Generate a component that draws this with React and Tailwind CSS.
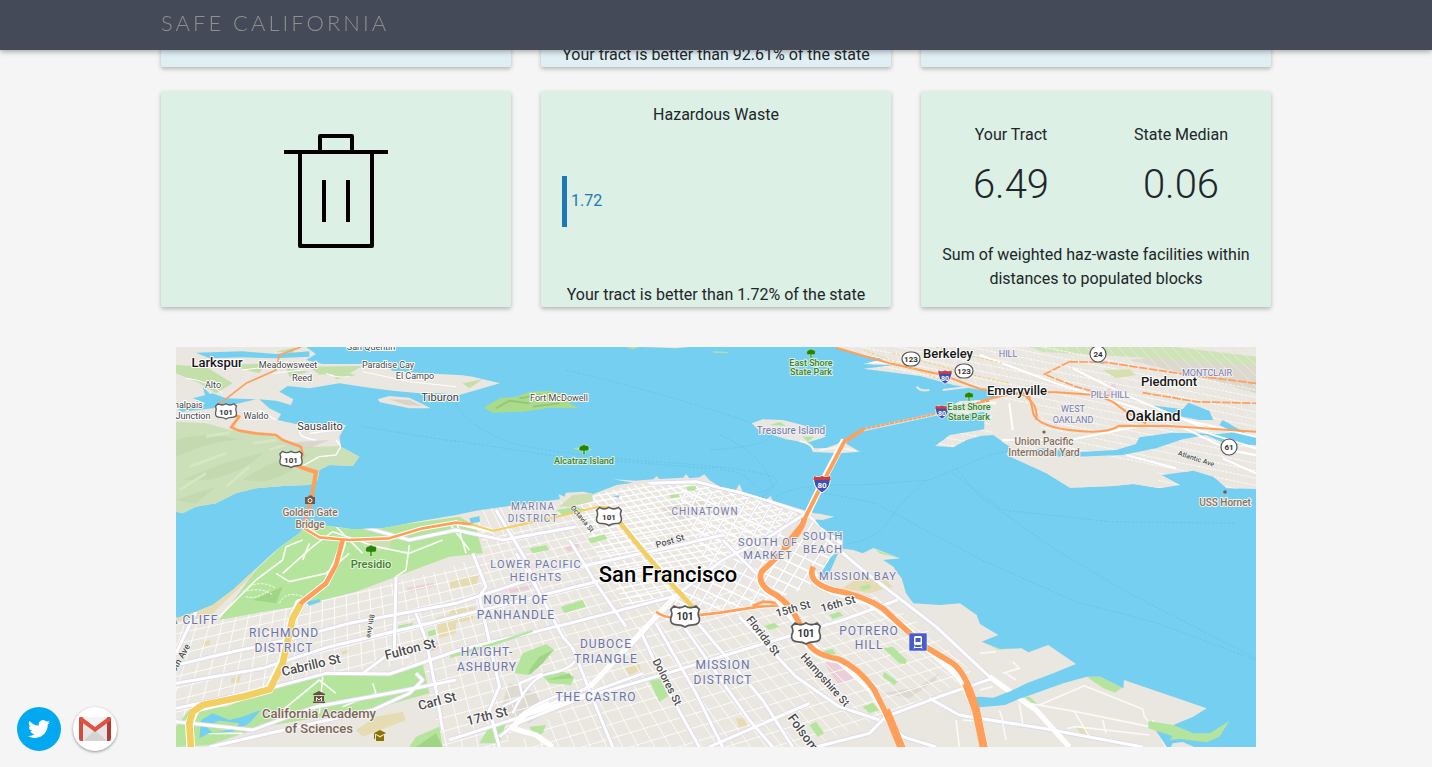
import React from "react";

const LAND = "#eae6e0";
const WATER = "#75cff0";
const PARK = "#b5e59d";
const SAND = "#e6dcb4";
const ORANGE = "#ff9f59";
const YELLOW = "#f3cf61";

const SF_COAST =
  "M0 835 L60 815 110 795 170 750 230 695 290 640 320 615 370 580 385 562 455 557 530 568 620 565 720 545 840 525 900 512 985 500 1152 478 1148 462 1165 470 1170 458 1222 455 1252 462 1322 435 1370 428 1312 418 1378 422 1432 418 1442 408 1450 417 1522 413 1530 402 1540 415 1570 412 1585 403 1600 420 1632 440 1680 450 1690 432 1700 455 1772 478 1784 468 1790 482 1882 510 1915 520 1935 522 1975 530 1940 540 1915 538 1932 560 2002 605 1990 625 2032 630 2060 640 2092 624 2172 655 2122 660 2152 680 2165 700 2177 715 2190 760 2212 790 2292 795 2352 790 2402 825 2412 852 2467 885 2417 905 2472 927 2537 925 2557 937 2617 915 2700 972 2632 1000 2552 1030 2522 1045 2487 1060 2452 1073 2412 1070 2392 1072 2400 1100 2412 1102 2487 1095 2522 1080 2662 1030 2732 1010 2772 1010 2842 1045 2844 1020 3092 1105 3052 1130 2992 1155 2932 1160 2972 1221 0 1221 Z";
const EAST_BAY =
  "M1977 21 L2032 40 2122 57 2062 72 2150 76 2062 86 2232 108 2332 135 2412 150 2457 150 2462 168 2440 180 2352 183 2312 205 2332 225 2372 222 2425 215 2425 268 2322 285 2277 318 2332 322 2372 300 2412 288 2452 285 2500 320 2492 345 2612 400 2682 443 2812 438 2872 432 2952 445 3012 435 2957 405 3052 392 3112 410 3152 445 3240 447 3240 21 Z";
const MARIN =
  "M0 21 L390 21 420 42 390 60 440 72 620 72 650 92 720 98 860 106 890 110 972 130 925 143 850 165 790 160 730 160 650 152 580 143 490 130 400 145 335 138 310 155 352 178 345 195 300 182 250 178 280 205 315 222 305 240 360 252 510 255 490 290 495 320 550 350 530 378 460 375 430 390 425 420 400 435 330 437 240 445 180 460 120 490 60 500 20 520 0 515 Z";

const range = (n) => Array.from({ length: n }, (_, i) => i);

const avenues = range(96).map((i) => `M475 -470 L${-1300 + i * 48} 1221`).join(" ");
const streets = range(44)
  .map((i) => {
    const y = 770 + i * 26 + i * i * 0.5;
    return `M0 ${y} L2700 ${y - 2700 * (0.21 + i * 0.004)}`;
  })
  .join(" ");
const somaA = range(30).map((i) => `M${1180 + i * 36} 1100 L${1560 + i * 40} 400`).join(" ");
const somaB = range(30).map((i) => `M1200 ${300 + i * 34} L2100 ${720 + i * 34}`).join(" ");
const northA = range(30).map((i) => `M800 ${480 + i * 17} L2000 ${270 + i * 17}`).join(" ");
const eastA = range(22).map((i) => `M1900 ${-120 + i * 22} L3240 ${150 + i * 22}`).join(" ");
const eastB = range(45).map((i) => `M${1950 + i * 40} 360 L${1900 + i * 32} 21`).join(" ");

const MAJOR_ROADS = [
  "M0 975 L150 940 330 900 520 850 840 790 1120 700 1400 640 1640 585",
  "M0 1030 L260 985 460 920 760 850 1000 790 1400 690",
  "M0 1105 L280 1045 450 1000 640 1002 850 930 1180 850 1490 770",
  "M60 815 L0 940",
  "M660 710 L655 930 560 1000",
  "M720 820 L750 900 780 1050 800 1170",
  "M720 1000 L740 1020 700 1060 590 1110 280 1180 100 1221",
  "M890 640 L930 740 910 770 930 860 970 1040 940 1110 970 1221",
  "M1020 640 L1080 740 1160 890 1190 925 1240 1050 1310 1221",
  "M960 510 L1050 660 1080 740",
  "M1180 600 L1260 730 1350 860",
  "M970 1190 L1060 1120 1242 1040 1380 900 1502 765 1640 660 1780 590 1890 520",
  "M1000 1160 L1200 1080 1440 1010 1700 930 2000 840 2165 780",
  "M1390 865 L1480 1060 1570 1221",
  "M1440 850 L1560 1060 1640 1221",
  "M1510 840 L1720 1140 1790 1221",
  "M1690 830 L1860 1010 1990 1100 2110 1140",
  "M1540 820 L1760 1080 1850 1221",
  "M1640 600 L1740 700 1800 790 1960 960",
  "M1600 1221 L1900 1090",
  "M1920 1221 L2080 1180 2130 1130 2290 1070 2450 1015",
  "M0 1145 L230 1170 420 1100 640 1060 840 1020",
  "M820 1200 L1100 1110 1400 1000",
  "M1930 580 L2060 690 2280 860 2440 1010 2580 1110 2680 1221",
  "M2120 1120 L2180 1190 2280 1221",
  "M2260 1075 L2350 1125 2600 1165 2900 1221",
  "M1420 430 L1560 425 1740 470 1890 520 2000 615",
  "M560 560 L700 600 840 570 980 600 1200 560",
];

const PARKS = [
  "M130 840 L240 690 320 615 385 562 455 557 530 568 720 548 850 530 900 560 920 640 820 650 540 755 360 800 280 812 Z",
  "M150 1100 L330 1030 440 1000 640 995 740 970 760 1060 600 1105 260 1160 100 1215 0 1221 0 1160 40 1110 Z",
  "M1040 940 L1110 912 1135 930 1100 970 1060 1005 1015 1000 Z",
  "M1090 1000 L1150 990 1195 1010 1185 1035 1120 1030 Z",
  "M1155 800 L1220 780 1230 800 1165 820 Z",
  "M1060 625 L1110 615 1120 630 1070 640 Z",
  "M1420 1022 L1460 1015 1490 1060 1450 1085 Z",
  "M1235 597 L1285 583 1295 597 1245 610 Z",
  "M1060 1160 L1110 1155 1100 1180 1080 1190 Z",
  "M2122 925 L2150 920 2192 960 2190 972 2170 970 Z",
  "M2125 995 L2165 1025 2155 1035 2120 1010 Z",
  "M1930 935 L1970 927 1980 943 1940 943 Z",
  "M1960 825 L1990 815 2002 827 1970 837 Z",
  "M2050 740 L2080 733 2086 743 2060 752 Z",
  "M1765 858 L1795 848 1810 860 1780 870 Z",
  "M2060 1100 L2090 1088 2110 1110 2080 1120 Z",
  "M1900 1155 L1920 1145 1945 1180 1925 1190 Z",
  "M2732 1010 L2777 1010 2842 1040 2817 1058 2782 1045 Z",
  "M2545 1070 L2560 1070 2585 1092 2570 1092 Z",
  "M2427 910 L2450 908 2485 930 2465 928 Z",
  "M2100 630 L2172 655 2110 640 Z",
  "M2440 285 L2480 290 2520 325 2480 320 Z",
  "M665 857 L710 848 712 865 668 877 Z",
  "M755 875 L778 868 780 884 758 890 Z",
  "M910 1210 L940 1160 990 1150 970 1210 Z",
  "M700 1221 L720 1190 790 1160 800 1221 Z",
  "M1140 510 L1200 500 1230 510 1160 525 Z",
  "M1530 440 L1560 438 1558 452 1535 452 Z",
  "M1480 465 L1510 462 1510 472 1485 475 Z",
  "M2590 205 L2630 202 2640 212 2600 214 Z",
  "M2850 345 L2920 340 2890 362 2860 360 Z",
  "M2740 85 L2800 80 2800 105 2750 108 Z",
  "M3120 60 L3240 90 3240 140 3180 120 Z",
];

const SANDS = [
  "M2050 710 L2130 720 2150 740 2080 760 2000 745 Z",
  "M780 835 L840 815 840 880 790 895 Z",
  "M822 720 L910 705 900 735 822 745 Z",
  "M822 810 L900 800 890 840 822 850 Z",
  "M600 1130 L680 1115 690 1140 560 1190 540 1170 Z",
  "M1345 985 L1390 970 1395 990 1360 1005 Z",
  "M1680 1135 L1705 1135 1715 1160 1690 1165 Z",
  "M2700 1162 L2730 1160 2740 1185 2720 1190 Z",
  "M165 1015 L195 1005 190 1025 165 1030 Z",
  "M80 905 L105 900 100 915 78 917 Z",
  "M495 935 L520 928 518 940 498 943 Z",
  "M200 180 L320 172 300 190 220 186 Z",
  "M3110 325 L3240 350 3240 365 3170 355 Z",
];

const FERRIES = [
  "M840 190 Q860 240 960 290 T1500 370 T1740 460",
  "M822 300 L1150 350 1600 385 1640 380",
  "M1170 90 Q1500 170 1700 240 T1600 330",
  "M1632 285 Q1760 340 1790 440 L1760 470",
  "M1632 390 Q1700 390 1740 440",
  "M1800 470 Q1860 430 2060 435 L2260 420 2440 345 2560 320",
  "M2010 612 Q2100 600 2140 540 T2250 420",
  "M2340 385 L2412 470 2640 630 2860 760 3240 955",
  "M1900 450 L2100 490 2412 658 2700 785 2940 848 3240 960",
  "M2330 400 L2480 510 2800 545 3180 550",
  "M560 260 L840 305",
];

function Drawing() {
  return (
    <g transform="translate(0 -7) scale(0.333333)" strokeLinejoin="round" fill="none">
      <defs>
        <clipPath id="sf"><path d={SF_COAST} /></clipPath>
        <clipPath id="east"><path d={EAST_BAY} /></clipPath>
        <clipPath id="marin"><path d={MARIN} /></clipPath>
        <clipPath id="grid-west">
          <path d="M0 840 L270 812 540 755 800 690 930 640 900 560 900 505 1222 480 1420 440 1500 770 1242 1035 1010 1150 990 1221 800 1221 760 1060 740 970 440 1000 330 1030 150 1100 0 1130 Z M1242 1040 L1502 765 1760 745 1900 830 2080 760 2250 860 2400 1010 2120 1130 1900 1221 1010 1221 Z" />
        </clipPath>
        <clipPath id="grid-north">
          <path d="M1180 480 L1420 425 1620 440 1880 515 1500 765 1350 800 Z" />
        </clipPath>
        <clipPath id="grid-soma">
          <path d="M1420 850 L1502 765 1890 520 2000 610 1900 740 1760 790 Z M1500 440 L1890 510 1600 700 Z" />
        </clipPath>
      </defs>
      <rect x="-2000" y="21" width="7240" height="1200" fill={WATER} />
      <g stroke="#5cb4e4" strokeWidth="3" strokeDasharray="7 5" opacity="0.45">
        {FERRIES.map((d) => <path key={d} d={d} />)}
      </g>

      <path d={MARIN} fill={LAND} />
      <g clipPath="url(#marin)">
        <path d="M0 245 L90 250 165 270 300 290 380 322 490 318 560 350 540 400 400 440 0 530Z" fill="#cbdfb8" />
        <path d="M0 300 Q100 270 190 300 Q110 300 0 350Z M20 420 Q150 360 260 340 Q200 400 90 420Z M200 420 Q300 350 400 340 Q340 410 260 425Z M0 480 L120 440 60 490Z" fill="#b9cfa5" opacity="0.4" />
        <path d="M90 290 L160 278 M40 380 L150 340 M10 450 L90 400 M150 440 L220 380 M280 330 L340 310 M230 310 L300 300" stroke="#dbe9cc" strokeWidth="8" opacity="0.7" />
        <path d="M0 75 L90 80 170 130 120 160 70 130 0 100Z M300 35 L360 22 350 40Z M400 80 L560 78 520 100 430 104Z M160 75 L270 70 250 100Z M330 85 L400 95 340 110Z M860 130 L920 118 880 145Z M460 85 L540 105 480 118Z" fill="#c3dfaa" />
        <path d="M60 38 L200 34 300 42 400 34 400 50 300 55 200 52 100 55Z M50 175 L110 160 150 175 240 178 190 190 110 205 20 215 0 205 90 190Z M80 140 L100 160 90 175Z" fill={WATER} />
        <path d="M30 115 Q90 120 140 160 M290 100 L380 90 M200 90 L280 80 M560 95 L700 125 840 140 M450 100 Q480 115 520 110" stroke="#fff" strokeWidth="3" />
        <path d="M390 250 Q340 290 420 300 M250 210 L300 240 M480 270 L400 280 M380 378 L430 350 480 345 495 318 480 300" stroke="#fff" strokeWidth="4" />
        <path d="M300 312 L380 305 460 300 400 325Z" fill="#d4cec4" opacity="0.7" />
      </g>
      <path d="M605 178 L640 168 700 173 765 205 700 205 612 187Z" fill={LAND} />
      <path d="M640 178 L700 180 740 198 690 195Z" fill="#d8d3c5" />
      <path d="M922 203 L972 175 1022 170 1062 155 1122 153 1167 165 1182 190 1207 205 1122 203 1042 215 952 218Z" fill="#a9db8a" />
      <path d="M960 205 L1000 182 1060 190 M1030 175 L1090 165 1140 172 M1070 200 L1150 190" stroke="#92c47a" strokeWidth="5" />
      <path d="M1190 325 L1225 320 1250 330 1215 332Z M1350 21 L1390 21 1370 28Z M1610 34 L1655 36 1655 39 1615 38Z" fill={PARK} />
      <path d="M1400 21 L1540 21 1500 25Z" fill={LAND} />

      <path d={EAST_BAY} fill={LAND} />
      <g clipPath="url(#east)">
        <path d="M2860 60 L2960 50 3240 70 3240 160 3100 120Z" fill="#ddd8cd" />
        <path d="M2560 21 L3000 21 3240 50 3240 78 2860 50 2600 36Z" fill="#cfe3b8" />
        <path d={eastA} stroke="#fff" strokeWidth="3" opacity="0.8" strokeDasharray="9 3" />
        <path d={eastB} stroke="#f8f7f5" strokeWidth="2" opacity="0.7" />
        <path d="M2480 355 L2800 350 2950 400 2940 450 2680 450Z M2460 190 L2560 190 2600 270 2780 290 2600 320 2500 310 2440 270Z" fill={LAND} />
        <path d="M2780 90 L2860 88 2880 105 2820 115Z" fill="#d6dfae" />
        <path d="M2790 150 L2815 128 2830 170 2800 168Z" fill="#efd3dc" />
        <path d="M2500 335 L2600 325 2700 337 2820 330 2880 312 2890 292 2990 278 3130 282 3190 275 3240 290 3240 315 3150 312 3090 285 3020 298 2940 325 2840 345 2700 350 2570 348Z" fill={WATER} />
        <path d="M2925 196 L3020 208 3037 188 3100 212 3112 240 3070 240 3020 230 2960 212Z M2750 65 L2790 68 2780 72Z M3140 240 L3210 280 3190 285 3130 255Z" fill={WATER} />
        <path d="M2080 66 L2150 70 M2412 45 L2640 130 2900 210 3240 290 M2690 85 L2860 170 3100 270 M2480 300 L2680 300 2880 260 M2500 190 L2510 270 M3020 262 L3160 330 3240 345 M3040 262 L3240 325 M2850 345 L3000 385 M3140 355 L3240 400" stroke="#fff" strokeWidth="6" />
      </g>
      <path d="M2222 140 Q2232 155 2260 150 M2300 150 L2380 140" stroke={LAND} strokeWidth="6" />
      <path d="M1727 250 L1760 238 1820 240 1880 255 1930 275 1950 290 1892 308 1830 298 1750 272Z M1907 325 L1950 325 2000 305 2052 335 1990 340 1910 336Z" fill={LAND} />
      <path d="M1780 255 L1812 246 1830 258Z M1880 290 L1915 290 1895 305Z" fill={PARK} />
      <path d="M1870 303 Q1905 310 1912 328 M1930 330 L1990 322 2040 333" stroke="#f6f5f2" strokeWidth="6" />

      <path d={SF_COAST} fill={LAND} />
      <g clipPath="url(#sf)">
        <path d="M1000 1030 L1080 1060 1120 1110 1060 1150 970 1120Z M2120 1060 L2230 1040 2290 1000 2280 1020 2200 1075Z M1450 500 L1600 480 1620 520 1500 540Z" fill="#d9d4ca" opacity="0.7" />
        {SANDS.map((d) => <path key={d} d={d} fill={SAND} />)}
        <path d="M1940 960 L1990 970 2045 1010 1990 1035 1960 995Z M1165 625 L1205 605 1210 620 1180 635Z M690 745 L770 728 780 738 700 755Z M985 750 L1070 735 1060 748 1000 760Z M755 920 L785 905 790 925 765 935Z" fill="#eacfd9" />
        <g clipPath="url(#grid-west)" stroke="#fff">
          <path d={avenues} strokeWidth="3" opacity="0.85" />
          <path d={streets} strokeWidth="3" opacity="0.85" />
        </g>
        <g clipPath="url(#grid-north)" stroke="#fff" strokeWidth="4">
          <path d={avenues} />
          <path d={northA} />
        </g>
        <g clipPath="url(#grid-soma)" stroke="#fff" strokeWidth="5">
          <path d={somaA} stroke="#dddbe8" strokeWidth="8" />
          <path d={somaA} />
          <path d={somaB} />
        </g>
        {PARKS.map((d) => <path key={d} d={d} fill={PARK} />)}
        <path d="M1060 990 L1090 950 1130 930 1100 970 1060 1005Z M1110 1020 L1180 1000 1190 1015Z M230 780 L320 740 300 790Z M720 1221 L780 1180 800 1221Z" fill="#a0d586" />
        <path d="M0 832 L110 792 235 690 225 710 130 800 100 830 0 845Z" fill={SAND} />
        <path d="M560 600 L650 585 640 625 570 640Z M1150 500 L1190 465 1250 460 1250 485 1180 500Z" fill="#cfdfb4" />
        <path d="M320 700 L410 620 470 575 600 620 700 640 800 600 M130 830 L240 720 320 660 330 620 380 600 M300 700 L340 725 450 700 520 640 M700 615 L690 690 660 710 M480 560 L560 640 M840 540 L870 640 M400 610 L380 660 M820 550 L880 630 M320 1110 L430 1020 480 1060 M500 1100 L600 1060 590 1030 M640 960 L700 950 M440 1010 L430 1120 M90 1180 L200 1180" stroke="#fff" strokeWidth="5" opacity="0.9" />
        <path d="M220 740 Q260 720 300 745 M200 755 Q260 740 290 765 M210 770 Q240 780 280 750 M310 790 Q330 750 380 770" stroke="#f5fbef" strokeWidth="3" strokeDasharray="8 4" />
        <path d="M75 1140 L110 1120 160 1140 200 1130 255 1110 220 1150 170 1175 100 1180 70 1195Z M390 785 L430 778 435 785 400 797Z M880 535 L910 528 912 545 885 550Z M1965 650 L1988 635 1960 700 1920 745 1935 700Z M1310 468 L1330 466 1328 474Z" fill={WATER} />
        <path d="M92 1160 L130 1142 190 1150 180 1165 110 1180Z" fill={PARK} />
        <path d="M1010 1120 Q1060 1010 1120 1000 T1200 960 M1000 1180 Q1010 1130 1090 1090 T1240 1050 M980 1100 L1040 1070 1030 1030 1100 1000" stroke="#dddbe8" strokeWidth="11" />
        <path d="M1010 1120 Q1060 1010 1120 1000 T1200 960 M1000 1180 Q1010 1130 1090 1090 T1240 1050 M980 1100 L1040 1070 1030 1030 1100 1000" stroke="#fff" strokeWidth="7" />
        <g stroke="#dcdaea" strokeWidth="14">
          {MAJOR_ROADS.map((d) => <path key={d} d={d} />)}
        </g>
        <g stroke="#fff" strokeWidth="9">
          {MAJOR_ROADS.map((d) => <path key={d} d={d} />)}
        </g>
        <path d="M1130 1221 L1080 1185 1010 1165 1035 1130 1120 1090 M1242 1040 L1502 765 M2440 1010 L2580 1110 2680 1221" stroke="#fff" strokeWidth="16" />
        <path d="M2480 1000 L2530 985 2510 965 M2490 1000 L2520 1020 M2412 940 L2460 935 M2412 1050 L2450 1040 M2590 1095 L2725 1037 2900 1107 2905 1130 2940 1170 M2560 1090 L2700 1115 2920 1160 M2695 1115 L2740 1190 M2780 1140 L2790 1180 M2675 1165 L2700 1160 2920 1185 M2930 1140 L2970 1221 M2470 1110 L2480 1140 M2530 1090 L2540 1150 M2480 1150 L2490 1200 M2340 1140 L2350 1221 M2360 1140 L2420 1145" stroke="#fafaf8" strokeWidth="5" />
        <path d="M822 945 L960 905 1070 870 1070 876 960 914 822 955Z" fill={PARK} />
      </g>
      <path d="M2917 1143 L2992 1155 3052 1180 3102 1180 3160 1143 3130 1190 3092 1207 3012 1197 2982 1200 2990 1188 2917 1165Z" fill={PARK} />
      <path d="M2985 1221 L2990 1210 3020 1206 3055 1221Z" fill={LAND} />

      <g stroke="#fff" strokeLinecap="round">
        <path d="M500 612 L480 670 450 730 380 785 345 850" strokeWidth="20" />
        <path d="M370 790 L345 850 320 960 280 1048 60 1105 40 1150 45 1235" strokeWidth="26" />
      </g>
      <path d="M375 21 L310 45 300 90 210 130 120 200" stroke={ORANGE} strokeWidth="5" />
      <path d="M120 200 L125 215 190 230 165 262 190 272 240 280 300 285 320 300 375 320 380 345 350 375 425 395" stroke={ORANGE} strokeWidth="8" />
      <path d="M370 380 L420 397 405 480 382 560" stroke={ORANGE} strokeWidth="12" />
      <path d="M380 560 L430 592 520 600 640 595 740 565 840 548 950 572" stroke="#fff" strokeWidth="14" />
      <path d="M380 562 L430 592 520 600 640 595 740 565 840 548 890 553" stroke={ORANGE} strokeWidth="8" />
      <path d="M885 553 L950 572 1100 540 1262 502 1300 500" stroke={YELLOW} strokeWidth="6" />
      <path d="M500 600 L480 675 450 730 380 785 370 795" stroke={ORANGE} strokeWidth="14" />
      <path d="M374 792 L350 835 320 970 282 1048 200 1070 80 1095 50 1115 40 1150 45 1225" stroke={YELLOW} strokeWidth="20" />
      <path d="M1310 520 L1390 620 1480 725 1540 790 1575 830" stroke={YELLOW} strokeWidth="14" />
      <path d="M1440 815 Q1470 840 1530 830 L1632 818 1750 800 1830 795" stroke="#fff" strokeWidth="12" />
      <path d="M1440 815 Q1470 840 1530 830 L1632 818 1750 800 1830 795 M1730 798 L1760 785 1820 790" stroke={ORANGE} strokeWidth="8" />
      <g fill="none" stroke="#fff">
        <path d="M2005 300 L1950 405 1890 530" strokeWidth="20" />
        <path d="M1840 615 L1755 700 Q1740 735 1800 770 L1860 845 1900 920 Q1920 950 1990 960 L2080 1040 2130 1120 2180 1221" strokeWidth="22" />
        <path d="M1910 690 Q1900 730 1980 755 L2080 785 2170 850 2320 980 2360 1020 2400 1110 2425 1221" strokeWidth="24" />
      </g>
      <path d="M2460 190 L2400 185 2300 218 2200 240 2060 270" stroke="#fff" strokeWidth="9" opacity="0.6" />
      <path d="M2440 182 L2360 198 2260 226 2060 268" stroke={ORANGE} strokeWidth="6" strokeDasharray="12 2" />
      <path d="M2062 268 L2005 305 1950 410 1880 548 1820 625" stroke={ORANGE} strokeWidth="12" />
      <path d="M1885 535 Q1880 570 1820 635 L1757 695 Q1740 735 1800 765 Q1840 790 1865 840 L1900 915 Q1920 945 1990 958 Q2050 985 2095 1050 L2130 1120 2178 1226" stroke={ORANGE} strokeWidth="17" />
      <path d="M1912 680 Q1890 725 1970 750 Q2060 765 2120 805 L2240 915 2330 970 Q2370 1000 2400 1100 L2424 1226" stroke={ORANGE} strokeWidth="17" />
      <path d="M2130 1110 L2178 1226 M2370 1030 L2400 1110 2424 1226" stroke={ORANGE} strokeWidth="24" />
      <path d="M1980 23 L2140 70 2300 105 2412 147 2500 155 2560 170 2570 210 Q2570 255 2680 270 T2830 257 L2980 258 3240 275" stroke={ORANGE} strokeWidth="6" />
      <path d="M2412 185 Q2520 150 2640 157 L2760 165 2810 185 2850 215 2910 250 M2580 240 Q2590 200 2550 170" stroke={ORANGE} strokeWidth="6" />
      <path d="M2680 65 L2605 103 2700 140 2800 168 M2680 65 L2790 67 3040 105 3240 130 M2900 158 L3060 185 3240 190" stroke={ORANGE} strokeWidth="5" strokeDasharray="26 4" />
      <path d="M2150 40 L2412 110 2500 130 M2062 30 L2300 120 M2280 22 L2480 70" stroke={YELLOW} strokeWidth="3" strokeDasharray="8 6" />
    </g>
  );
}

const LABEL_STYLES = {
  city: "fill-black text-[22px] font-medium stroke-white stroke-[2px]",
  town: "fill-[#161616] text-[15px] font-medium stroke-white stroke-[2px]",
  suburb: "fill-[#161616] text-[13px] font-medium stroke-white stroke-[2px]",
  village: "fill-[#3a3a3a] text-[11px] stroke-white stroke-[2px]",
  hamlet: "fill-[#444] text-[9px] stroke-white stroke-[2px]",
  district: "fill-[#6a75a3] text-[12px] tracking-[1px] stroke-[#f2f0f2] stroke-[2px]",
  quarterNear: "fill-[#6f78a4] text-[11px] tracking-[1px] stroke-[#f2f0f2] stroke-[2px]",
  quarter: "fill-[#767da5] text-[10px] tracking-[1px] stroke-[#f2f0f2] stroke-[2px]",
  quarterFar: "fill-[#767da5] text-[9px] stroke-[#f2f0f2] stroke-[2px]",
  island: "fill-[#6c7aa8] text-[10px] stroke-[#f2f0f2] stroke-[2px]",
  park: "fill-[#3f7f25] text-[11px] font-medium stroke-[#e2f3dc] stroke-[2px]",
  parkSmall: "fill-[#3f7f25] text-[9px] font-medium stroke-[#d8f0ea] stroke-[2px]",
  poi: "fill-[#7b6558] text-[13px] font-medium stroke-[#f4f2ee] stroke-[2px]",
  poiSmall: "fill-[#84705f] text-[10px] font-medium stroke-[#f4f2ee] stroke-[2px]",
  streetNear: "fill-[#4c4c4c] text-[13px] font-medium stroke-white stroke-[2px]",
  street: "fill-[#4c4c4c] text-[11px] font-medium stroke-white stroke-[2px]",
  streetSmall: "fill-[#4c4c4c] text-[9px] font-medium stroke-white stroke-[1px]",
  streetTiny: "fill-[#4c4c4c] text-[7px] font-medium stroke-white stroke-[1px]",
};

const LABELS = [
  ["San Francisco", 668, 574, "city"],
  ["Berkeley", 948, 353, "suburb"],
  ["Emeryville", 1017, 390, "suburb"],
  ["Oakland", 1153, 416, "town"],
  ["Piedmont", 1169, 381, "suburb"],
  ["Larkspur", 217, 362, "suburb"],
  ["Sausalito", 320, 426, "village"],
  ["Tiburon", 440, 397, "village"],
  ["San Quentin", 371, 347, "hamlet"],
  ["Meadowsweet", 288, 365, "hamlet"],
  ["Reed", 302, 378, "hamlet"],
  ["Alto", 213, 385, "hamlet"],
  ["Paradise Cay", 388, 365, "hamlet"],
  ["El Campo", 415, 376, "hamlet"],
  ["Tamalpais", 182, 405, "hamlet"],
  ["Junction", 193, 416, "hamlet"],
  ["Waldo", 256, 416, "hamlet"],
  ["Fort McDowell", 559, 398, "hamlet"],
  ["Treasure Island", 791, 430, "island"],
  ["Alcatraz Island", 584, 461, "parkSmall"],
  ["East Shore", 811, 363, "parkSmall"],
  ["State Park", 811, 372, "parkSmall"],
  ["East Shore", 969, 407, "parkSmall"],
  ["State Park", 969, 417, "parkSmall"],
  ["Presidio", 371, 564, "park"],
  ["Golden Gate", 310, 512, "poiSmall"],
  ["Bridge", 310, 524, "poiSmall"],
  ["Union Pacific", 1044, 441, "poiSmall"],
  ["Intermodal Yard", 1044, 452, "poiSmall"],
  ["USS Hornet", 1225, 502, "poiSmall"],
  ["California Academy", 319, 713, "poi"],
  ["of Sciences", 319, 728, "poi"],
  ["MARINA", 533, 506, "quarter"],
  ["DISTRICT", 533, 518, "quarter"],
  ["CHINATOWN", 705, 511, "quarter"],
  ["SOUTH OF", 768, 542, "quarterNear"],
  ["MARKET", 768, 555, "quarterNear"],
  ["SOUTH", 823, 536, "quarterNear"],
  ["BEACH", 823, 549, "quarterNear"],
  ["MISSION BAY", 858, 576, "quarterNear"],
  ["LOWER PACIFIC", 536, 564, "quarterNear"],
  ["HEIGHTS", 536, 577, "quarterNear"],
  ["NORTH OF", 516, 600, "district"],
  ["PANHANDLE", 516, 615, "district"],
  ["RICHMOND", 284, 633, "district"],
  ["DISTRICT", 284, 648, "district"],
  ["HAIGHT-", 487, 652, "district"],
  ["ASHBURY", 487, 667, "district"],
  ["DUBOCE", 606, 644, "district"],
  ["TRIANGLE", 606, 659, "district"],
  ["THE CASTRO", 596, 697, "district"],
  ["MISSION", 723, 665, "district"],
  ["DISTRICT", 723, 680, "district"],
  ["POTRERO", 869, 631, "district"],
  ["HILL", 869, 645, "district"],
  ["SEA CLIFF", 186, 620, "district"],
  ["HILL", 1008, 354, "quarterFar"],
  ["MONTCLAIR", 1207, 373, "quarterFar"],
  ["PILL HILL", 1110, 395, "quarterFar"],
  ["WEST", 1073, 409, "quarterFar"],
  ["OAKLAND", 1073, 420, "quarterFar"],
  ["Cabrillo St", 311, 665, "streetNear", -13],
  ["Fulton St", 410, 649, "streetNear", -14],
  ["Carl St", 437, 701, "streetNear", -15],
  ["17th St", 487, 716, "streetNear", -14],
  ["Dolores St", 667, 682, "street", 63],
  ["Florida St", 763, 636, "street", 52],
  ["Hampshire St", 825, 680, "street", 48],
  ["Folsom St", 808, 739, "streetNear", 54],
  ["15th St", 793, 609, "street", -16],
  ["16th St", 838, 604, "street", -16],
  ["Post St", 670, 541, "streetSmall", -16],
  ["Octavia St", 582, 519, "streetTiny", 50],
  ["8th Ave", 370, 626, "streetTiny", 98],
  ["25th Ave", 179, 660, "streetSmall", -60],
  ["Atlantic Ave", 1196, 459, "streetTiny", 18],
];

function UsShield({ x, y, s = 1 }) {
  return (
    <g transform={`translate(${x} ${y})`}>
      <path
        transform={`scale(${s})`}
        d="M-10 -9 Q-5 -6 0 -9 Q5 -6 10 -9 L13 -6 Q11 -2 13 2 Q14 8 7 8 Q3 8 0 10 Q-3 8 -7 8 Q-14 8 -13 2 Q-11 -2 -13 -6Z"
        fill="#fff" stroke="#5b5b5b" strokeWidth="1.6"
      />
      <text dy="4" textAnchor="middle" className={s > 1 ? "fill-[#333] text-[10px] font-bold" : "fill-[#333] text-[8px] font-bold"}>101</text>
    </g>
  );
}

function Interstate({ x, y, s = 1 }) {
  return (
    <g transform={`translate(${x} ${y})`}>
      <g transform={`scale(${s})`}>
        <path d="M-8 -8 Q-4 -6 0 -8 Q4 -6 8 -8 Q10 3 0 9 Q-10 3 -8 -8Z" fill="#3f51b0" stroke="#fff" strokeWidth="1" />
        <path d="M-8 -8 Q-4 -6 0 -8 Q4 -6 8 -8 L8.6 -4 L-8.6 -4Z" fill="#d13b3b" />
      </g>
      <text dy="4" textAnchor="middle" className={s < 1 ? "fill-white text-[7px] font-bold" : "fill-white text-[8px] font-bold"}>80</text>
    </g>
  );
}

function StateRoute({ x, y, n }) {
  return (
    <g transform={`translate(${x} ${y})`}>
      <rect x={n.length > 2 ? -9 : -8} y={n.length > 2 ? -7 : -8} width={n.length > 2 ? 18 : 16} height={n.length > 2 ? 14 : 16} rx="8" fill="#fff" stroke="#555" strokeWidth="1.2" />
      <text dy="3" textAnchor="middle" className="fill-[#333] text-[8px] font-bold">{n}</text>
    </g>
  );
}

function Tree({ x, y, s = 1 }) {
  return (
    <path
      transform={`translate(${x} ${y}) scale(${s})`}
      d="M-1 5 L-1 2 Q-6 3 -5.5 -1 Q-5 -4 -2 -4 Q0 -6 2 -4 Q6 -4 5.5 -1 Q6 3 1 2 L1 5 L2 6 L-2 6Z"
      fill="#238500" stroke="#d8f0cc" strokeWidth="0.6"
    />
  );
}

function CityMap() {
  return (
    <svg
      role="img"
      aria-label="Map of San Francisco"
      viewBox="0 0 1080 400"
      preserveAspectRatio="xMidYMid slice"
      className="block h-[400px] w-full"
    >
      <Drawing />
      <g transform="translate(-176 -347)" className="font-['Roboto',sans-serif]">
        <UsShield x={226} y={411} s={0.8} />
        <UsShield x={291} y={459} s={0.85} />
        <UsShield x={609} y={516} s={0.95} />
        <UsShield x={685} y={616} s={1.1} />
        <UsShield x={806} y={633} s={1.1} />
        <Interstate x={822} y={484} />
        <Interstate x={945} y={377} s={0.8} />
        <Interstate x={942} y={412} s={0.8} />
        <StateRoute x={911} y={359} n="123" />
        <StateRoute x={964} y={371} n="123" />
        <StateRoute x={1098} y={354} n="24" />
        <StateRoute x={1229} y={447} n="61" />
        <Tree x={811} y={353} s={0.8} />
        <Tree x={969} y={396} s={0.8} />
        <Tree x={584} y={449} s={0.9} />
        <Tree x={371} y={550} />
        <circle cx="1044" cy="432" r="1.6" fill="#7b5a48" />
        <circle cx="1225" cy="492" r="1.8" fill="#7b5a48" />
        <g transform="translate(310 500)">
          <path d="M-5 -3 H-2 L-1 -4.500 H2 L3 -3 H5 V4 H-5Z" fill="#7b5540" />
          <circle cy="0.500" r="2" fill="none" stroke="#fff" strokeWidth="1" />
        </g>
        <g transform="translate(319 697)" fill="#6b4f42">
          <path d="M0 -6 L6 -3 V-2 H-6 V-3Z M-5 -1 H5 V4 H-5Z M-6 4.500 H6 V6 H-6Z" />
          <path d="M-2.500 4 V0.500 L0 3 L2.500 0.500 V4" fill="none" stroke="#f4f2ee" strokeWidth="1" />
        </g>
        <g transform="translate(380 736)" fill="#8b7300">
          <path d="M-6 -3 L0 -6 L6 -3 L0 0Z M-4 -1 L0 1.500 L4 -1 V5 H-4Z M-6 -3 V3 H-5 V-3Z" />
        </g>
        <g transform="translate(918 642)">
          <rect x="-9" y="-9" width="18" height="18" rx="1" fill="#4a5ccc" stroke="#eef" strokeWidth="0.600" />
          <rect x="-4" y="-6" width="8" height="9" rx="1.500" fill="#fff" />
          <rect x="-2.500" y="-4" width="5" height="4" fill="#4a5ccc" />
          <path d="M-3 3.500 L-4 6.500 M3 3.500 L4 6.500 M-4 5.500 H4" stroke="#fff" strokeWidth="1" />
        </g>
        {LABELS.map(([text, x, y, kind, angle]) => (
          <text
            key={text + x + y}
            textAnchor="middle"
            dominantBaseline="central"
            paintOrder="stroke"
            strokeLinejoin="round"
            transform={`translate(${x} ${y}) rotate(${angle || 0})`}
            className={LABEL_STYLES[kind]}
          >
            {text}
          </text>
        ))}
      </g>
    </svg>
  );
}

const CARD = "rounded-[2px] shadow-[0_2px_4px_rgba(0,0,0,0.26)]";

function TrashIcon() {
  return (
    <svg viewBox="0 0 128 128" className="size-32" fill="none" stroke="#000" strokeWidth="4" strokeLinejoin="round" aria-hidden="true">
      <path d="M12 25 H116 M28 25 V119 H100 V25 M48 25 V9 H80 V25 M52 53 V95 M76 53 V95" />
    </svg>
  );
}

function Stat({ label, value }) {
  return (
    <div className="flex flex-1 flex-col items-center gap-3">
      <span>{label}</span>
      <span className="text-[40px] leading-[52px] font-light">{value}</span>
    </div>
  );
}

export default function App() {
  return (
    <div className="min-h-screen bg-[#f5f5f5] font-['Roboto',sans-serif] text-base text-[#212529]">
      <header className="fixed inset-x-0 top-0 z-10 h-[50px] bg-[#444a58] shadow-[0_2px_5px_rgba(0,0,0,0.3)]">
        <div className="mx-auto flex h-11 max-w-[1140px] items-center px-[15px]">
          <a href="#" className="font-['Lato',sans-serif] text-[22px] font-light tracking-[3px] text-[#8f8f8f]">SAFE CALIFORNIA</a>
        </div>
      </header>

      <main className="mx-auto max-w-[1140px] px-[15px] pb-5">
        <section className="grid grid-cols-3 gap-x-[30px] gap-y-6 text-center">
          <div className={`${CARD} h-[67px] bg-[#e0eff4]`} />
          <div className={`${CARD} flex h-[67px] items-end justify-center bg-[#e0eff4]`}>
            <p>Your tract is better than 92.61% of the state</p>
          </div>
          <div className={`${CARD} h-[67px] bg-[#e0eff4]`} />

          <div className={`${CARD} flex justify-center bg-[#dcf0e5] pt-9`}>
            <TrashIcon />
          </div>
          <div className={`${CARD} flex flex-col justify-between bg-[#dcf0e5] pt-3`}>
            <h2>Hazardous Waste</h2>
            <div className="flex items-center gap-1 px-[21px] pb-2 text-[#1f77b4]">
              <span className="h-[51px] w-[5px] bg-[#1f77b4]" />
              <span>1.72</span>
            </div>
            <p>Your tract is better than 1.72% of the state</p>
          </div>
          <div className={`${CARD} flex flex-col bg-[#dcf0e5] pt-8 pb-4`}>
            <div className="flex px-[5px]">
              <Stat label="Your Tract" value="6.49" />
              <Stat label="State Median" value="0.06" />
            </div>
            <p className="mt-8 px-[15px]">Sum of weighted haz-waste facilities within distances to populated blocks</p>
          </div>
        </section>

        <section className="mt-10 px-[15px]">
          <CityMap />
        </section>
      </main>

      <div className="fixed bottom-4 left-[17px] flex items-center gap-3">
        <a href="#" aria-label="Share on Twitter" className="flex size-11 items-center justify-center rounded-full bg-[#03a9f0]">
          <svg viewBox="0 0 24 24" className="size-[22px]" fill="#fff" aria-hidden="true">
            <path d="M23.950 4.570a10 10 0 0 1-2.820.770 4.960 4.960 0 0 0 2.160-2.720c-.950.550-2 .950-3.130 1.180a4.920 4.920 0 0 0-8.380 4.480C7.690 8.090 4.070 6.130 1.640 3.160a4.920 4.920 0 0 0 1.520 6.570 4.900 4.900 0 0 1-2.230-.610v.060a4.920 4.920 0 0 0 3.950 4.830 5 5 0 0 1-2.210.080 4.940 4.940 0 0 0 4.600 3.420A9.870 9.870 0 0 1 0 19.540a14 14 0 0 0 7.550 2.210c9.050 0 14-7.500 14-13.980 0-.210 0-.420-.020-.630a9.940 9.940 0 0 0 2.420-2.570z" />
          </svg>
        </a>
        <a href="#" aria-label="Share by Gmail" className="flex size-11 items-center justify-center rounded-full bg-white shadow-[0_1px_3px_rgba(0,0,0,0.4)]">
          <svg viewBox="0 0 32 24" className="h-6 w-8" aria-hidden="true">
            <path d="M2 0 H30 V24 H2Z" fill="#e6e6e6" />
            <path d="M4 24 L16 13 L28 24Z" fill="#d4d4d4" />
            <path d="M4 3 L16 13 L28 3 V0 H4Z" fill="#f2f2f2" />
            <path d="M0 2 Q0 0 2 0 L4 0.500 V24 H2 Q0 24 0 22Z" fill="#d54b3d" />
            <path d="M28 0.500 L30 0 Q32 0 32 2 V22 Q32 24 30 24 H28Z" fill="#b63a2e" />
            <path d="M0 2 Q0 0 2 0 Q3 0 4 1 L16 10 L28 1 Q29 0 30 0 Q32 0 32 2 Q32 3.500 31 4 L16 15 L1 4 Q0 3.500 0 2Z" fill="#de5145" />
          </svg>
        </a>
      </div>
    </div>
  );
}
